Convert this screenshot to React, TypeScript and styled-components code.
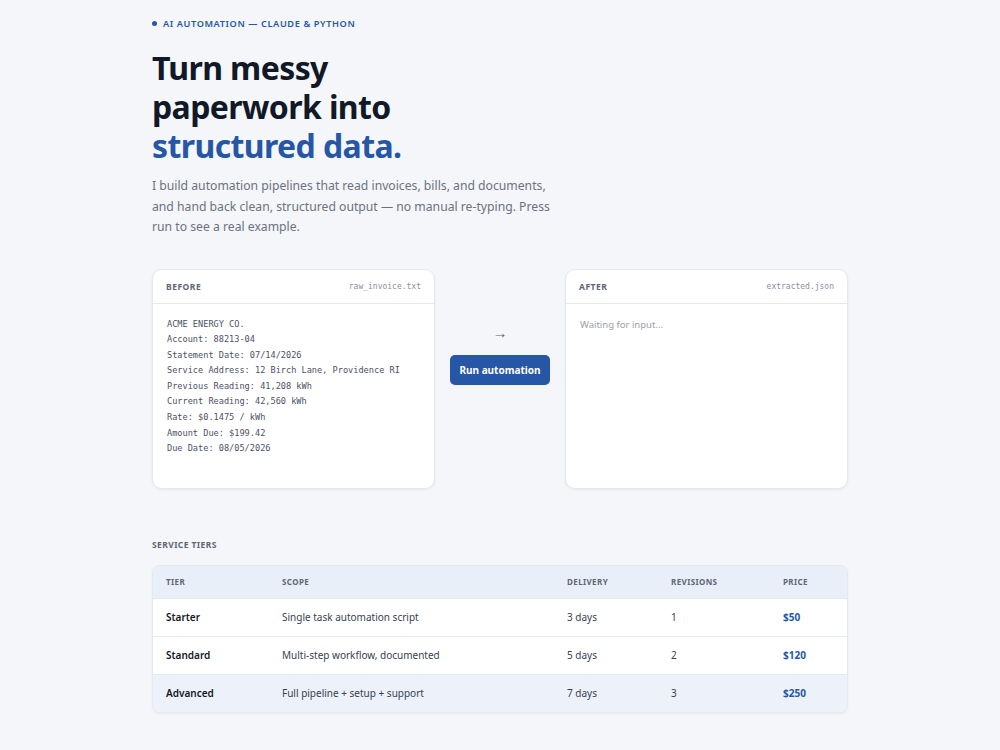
import React from "react";
import styled, { createGlobalStyle } from "styled-components";

const Color = {
  BG: "#f4f6f9",
  INK: "#111827",
  BLUE: "#2656a6",
  MUTED: "#6b7280",
  LABEL: "#5f6675",
  BORDER: "#e4e8ef",
  TINT: "#e9eff9",
  WHITE: "#ffffff",
};

const SANS = `"Noto Sans", "Open Sans", sans-serif`;
const MONO = `"DejaVu Sans Mono", "Liberation Mono", monospace`;

const GlobalStyle = createGlobalStyle`
  html, body {
    margin: 0;
    background: ${Color.BG};
    font-family: ${SANS};
  }
`;

const invoiceLines = [
  "ACME ENERGY CO.",
  "Account: 88213-04",
  "Statement Date: 07/14/2026",
  "Service Address: 12 Birch Lane, Providence RI",
  "Previous Reading: 41,208 kWh",
  "Current Reading: 42,560 kWh",
  "Rate: $0.1475 / kWh",
  "Amount Due: $199.42",
  "Due Date: 08/05/2026",
];

interface Tier {
  name: string;
  scope: string;
  delivery: string;
  revisions: number;
  price: string;
  featured?: boolean;
}

const tiers: Tier[] = [
  { name: "Starter", scope: "Single task automation script", delivery: "3 days", revisions: 1, price: "$50" },
  { name: "Standard", scope: "Multi-step workflow, documented", delivery: "5 days", revisions: 2, price: "$120" },
  { name: "Advanced", scope: "Full pipeline + setup + support", delivery: "7 days", revisions: 3, price: "$250", featured: true },
];

export default function App() {
  return (
    <>
      <GlobalStyle />
      <Page>
        <Eyebrow>
          <Dot />
          AI AUTOMATION — CLAUDE &amp; PYTHON
        </Eyebrow>
        <Headline>
          Turn messy
          <br />
          paperwork into
          <br />
          <Accent>structured data.</Accent>
        </Headline>
        <Lead>
          I build automation pipelines that read invoices, bills, and documents,
          and hand back clean, structured output — no manual re-typing. Press
          run to see a real example.
        </Lead>

        <Demo>
          <Card>
            <CardHeader>
              <CardTitle>BEFORE</CardTitle>
              <FileName>raw_invoice.txt</FileName>
            </CardHeader>
            <CardBody>
              <Invoice>{invoiceLines.join("\n")}</Invoice>
            </CardBody>
          </Card>

          <Middle>
            <Arrow>→</Arrow>
            <RunButton type="button">Run automation</RunButton>
          </Middle>

          <Card>
            <CardHeader>
              <CardTitle>AFTER</CardTitle>
              <FileName>extracted.json</FileName>
            </CardHeader>
            <CardBody>
              <Placeholder>Waiting for input...</Placeholder>
            </CardBody>
          </Card>
        </Demo>

        <SectionLabel>SERVICE TIERS</SectionLabel>
        <Table>
          <HeadRow>
            <HeadCell>TIER</HeadCell>
            <HeadCell>SCOPE</HeadCell>
            <HeadCell>DELIVERY</HeadCell>
            <HeadCell>REVISIONS</HeadCell>
            <HeadCell>PRICE</HeadCell>
          </HeadRow>
          {tiers.map((t) => (
            <BodyRow key={t.name} $featured={t.featured}>
              <TierName>{t.name}</TierName>
              <Cell>{t.scope}</Cell>
              <Cell>{t.delivery}</Cell>
              <Cell>{t.revisions}</Cell>
              <Price>{t.price}</Price>
            </BodyRow>
          ))}
        </Table>
      </Page>
    </>
  );
}

const Page = styled.main`
  width: 696px;
  margin: 0 auto;
  padding: 16px 0 40px;
`;

const Eyebrow = styled.div`
  display: flex;
  align-items: center;
  gap: 6px;
  font-size: 9.2px;
  font-weight: 600;
  letter-spacing: 0.6px;
  color: ${Color.BLUE};
  height: 14px;
`;

const Dot = styled.span`
  width: 5px;
  height: 5px;
  border-radius: 50%;
  background: ${Color.BLUE};
`;

const Headline = styled.h1`
  margin: 18px 0 0;
  font-size: 32px;
  line-height: 39px;
  font-weight: 700;
  letter-spacing: -0.6px;
  color: ${Color.INK};
`;

const Accent = styled.span`
  color: ${Color.BLUE};
`;

const Lead = styled.p`
  margin: 11px 0 0;
  width: 400px;
  font-size: 12.2px;
  line-height: 20.5px;
  color: ${Color.MUTED};
`;

const Demo = styled.section`
  display: grid;
  grid-template-columns: 1fr 100px 1fr;
  gap: 15px;
  margin-top: 31px;
`;

const Card = styled.div`
  background: ${Color.WHITE};
  border: 1px solid ${Color.BORDER};
  border-radius: 10px;
  box-shadow: 0 1px 3px rgba(15, 23, 42, 0.06);
  height: 220px;
  box-sizing: border-box;
  display: flex;
  flex-direction: column;
  overflow: hidden;
`;

const CardHeader = styled.div`
  display: flex;
  justify-content: space-between;
  align-items: center;
  height: 33px;
  padding: 0 13px;
  border-bottom: 1px solid ${Color.BORDER};
`;

const CardTitle = styled.span`
  font-size: 8.5px;
  font-weight: 700;
  letter-spacing: 0.5px;
  color: ${Color.LABEL};
`;

const FileName = styled.span`
  font-family: ${MONO};
  font-size: 8px;
  color: #8a909c;
`;

const CardBody = styled.div`
  padding: 13px 14px;
`;

const Invoice = styled.pre`
  margin: 0;
  font-family: ${MONO};
  font-size: 8.6px;
  line-height: 15.6px;
  color: #4b5262;
  white-space: pre;
`;

const Placeholder = styled.p`
  margin: 0;
  font-size: 9.5px;
  line-height: 15px;
  color: #9aa0ab;
`;

const Middle = styled.div`
  display: flex;
  flex-direction: column;
  align-items: center;
  justify-content: center;
  gap: 16px;
  padding-bottom: 48px;
`;

const Arrow = styled.span`
  font-size: 15px;
  line-height: 14px;
  color: #3566b8;
`;

const RunButton = styled.button`
  width: 100px;
  height: 30px;
  border: none;
  border-radius: 5px;
  background: ${Color.BLUE};
  color: ${Color.WHITE};
  font-family: ${SANS};
  font-size: 10px;
  font-weight: 700;
  cursor: pointer;
`;

const SectionLabel = styled.h2`
  margin: 50px 0 0;
  font-size: 8.5px;
  font-weight: 700;
  letter-spacing: 0.4px;
  color: ${Color.LABEL};
`;

const Table = styled.div`
  margin-top: 15px;
  border: 1px solid ${Color.BORDER};
  border-radius: 8px;
  overflow: hidden;
  background: ${Color.WHITE};
  box-shadow: 0 1px 3px rgba(15, 23, 42, 0.05);
`;

const columns = "116px 285px 104px 112px 1fr";

const HeadRow = styled.div`
  display: grid;
  grid-template-columns: ${columns};
  align-items: center;
  height: 32px;
  padding: 0 13px;
  background: ${Color.TINT};
  border-bottom: 1px solid ${Color.BORDER};
`;

const HeadCell = styled.span`
  font-size: 8px;
  font-weight: 700;
  letter-spacing: 0.4px;
  color: ${Color.LABEL};
`;

const BodyRow = styled.div<{ $featured?: boolean }>`
  display: grid;
  grid-template-columns: ${columns};
  align-items: center;
  height: 37px;
  padding: 0 13px;
  background: ${(p) => (p.$featured ? "#ecf1fa" : Color.WHITE)};
  border-bottom: 1px solid ${Color.BORDER};

  &:last-child {
    border-bottom: none;
  }
`;

const Cell = styled.span`
  font-size: 10px;
  color: #374151;
`;

const TierName = styled(Cell)`
  font-weight: 600;
  color: ${Color.INK};
`;

const Price = styled(Cell)`
  font-weight: 700;
  color: ${Color.BLUE};
`;
